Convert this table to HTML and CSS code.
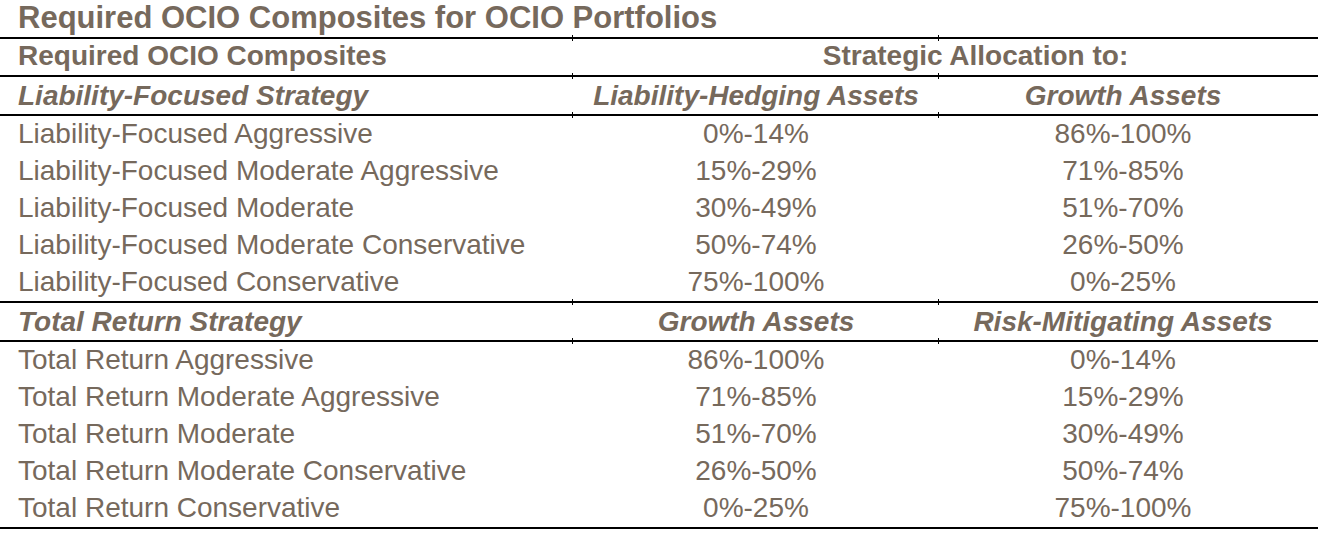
FILE: index.html
```html
<!DOCTYPE html>
<html lang="en">
<head>
<meta charset="utf-8">
<title>Required OCIO Composites for OCIO Portfolios</title>
<link rel="stylesheet" href="styles.css">
</head>
<body>
<div class="table">
  <div class="title ticked">Required OCIO Composites for OCIO Portfolios</div>
  <div class="row head ticked">
    <div class="c1">Required OCIO Composites</div>
    <div class="span">Strategic Allocation to:</div>
  </div>
  <div class="row sub sub-a ticked">
    <div class="c1">Liability-Focused Strategy</div>
    <div class="c2">Liability-Hedging Assets</div>
    <div class="c3">Growth Assets</div>
  </div>
  <div class="group ticked">
    <div class="row data"><div class="c1">Liability-Focused Aggressive</div><div class="c2">0%-14%</div><div class="c3">86%-100%</div></div>
    <div class="row data"><div class="c1">Liability-Focused Moderate Aggressive</div><div class="c2">15%-29%</div><div class="c3">71%-85%</div></div>
    <div class="row data"><div class="c1">Liability-Focused Moderate</div><div class="c2">30%-49%</div><div class="c3">51%-70%</div></div>
    <div class="row data"><div class="c1">Liability-Focused Moderate Conservative</div><div class="c2">50%-74%</div><div class="c3">26%-50%</div></div>
    <div class="row data"><div class="c1">Liability-Focused Conservative</div><div class="c2">75%-100%</div><div class="c3">0%-25%</div></div>
  </div>
  <div class="row sub sub-b ticked">
    <div class="c1">Total Return Strategy</div>
    <div class="c2">Growth Assets</div>
    <div class="c3">Risk-Mitigating Assets</div>
  </div>
  <div class="group">
    <div class="row data"><div class="c1">Total Return Aggressive</div><div class="c2">86%-100%</div><div class="c3">0%-14%</div></div>
    <div class="row data"><div class="c1">Total Return Moderate Aggressive</div><div class="c2">71%-85%</div><div class="c3">15%-29%</div></div>
    <div class="row data"><div class="c1">Total Return Moderate</div><div class="c2">51%-70%</div><div class="c3">30%-49%</div></div>
    <div class="row data"><div class="c1">Total Return Moderate Conservative</div><div class="c2">26%-50%</div><div class="c3">50%-74%</div></div>
    <div class="row data"><div class="c1">Total Return Conservative</div><div class="c2">0%-25%</div><div class="c3">75%-100%</div></div>
  </div>
</div>
</body>
</html>
```
FILE: styles.css
```css
* { box-sizing: border-box; }

html, body {
  margin: 0;
  padding: 0;
  background: #ffffff;
}

body {
  font-family: "Liberation Sans", Arial, sans-serif;
  color: #76695c;
}

.table {
  width: 1318px;
}

.title {
  height: 39px;
  padding: 0 0 0 18px;
  font-size: 31px;
  font-weight: bold;
  line-height: 36px;
  border-bottom: 2px solid #000;
  white-space: nowrap;
}

.row {
  display: grid;
  grid-template-columns: 572px 366px 380px;
  font-size: 28px;
  line-height: 32px;
  white-space: nowrap;
}

.c1 { padding-left: 18px; }
.c2 { text-align: center; padding-left: 2px; }
.c3 { text-align: center; padding-right: 10px; }

.head {
  height: 38px;
  padding-top: 1px;
  font-weight: bold;
  border-bottom: 2px solid #000;
}

.head .span {
  grid-column: 2 / 4;
  text-align: center;
  padding-left: 61px;
}

.sub {
  height: 39px;
  font-weight: bold;
  font-style: italic;
  border-bottom: 2px solid #000;
}

.sub-a { padding-top: 3px; }
.sub-b { padding-top: 3px; }

.group {
  border-bottom: 2px solid #000;
}

.data {
  height: 37px;
  padding-top: 2px;
}

.ticked { position: relative; }

.ticked::before,
.ticked::after {
  content: "";
  position: absolute;
  bottom: -4px;
  width: 1px;
  height: 6px;
  background: #000;
}

.ticked::before { left: 572px; }
.ticked::after { left: 938px; }
```
